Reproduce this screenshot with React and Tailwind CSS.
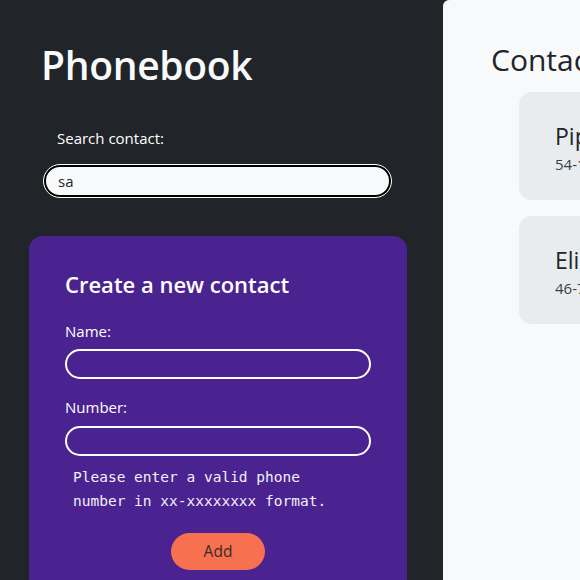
const contacts = [
  { name: "Pippa Sandberg", number: "54-1234567" },
  { name: "Elisa Sanders", number: "46-7654321" },
];

const App = () => {
  return (
    <div className="flex h-[580px] w-[580px] overflow-hidden bg-[#212529] font-['Open_Sans',sans-serif]">
      <div className="w-[443px] shrink-0 text-white">
        <h1 className="ml-[41px] mt-[41px] text-[39px] font-semibold leading-[48px] tracking-[-0.3px] text-[#f8f9fa]">
          Phonebook
        </h1>
        <div className="ml-[44px] mt-[39px] w-[347px]">
          <label className="ml-[13px] block text-[15px] leading-[20px]">Search contact:</label>
          <input
            defaultValue="sa"
            className="mt-[17px] h-[32px] w-full rounded-full border-2 border-black bg-[#f8f9fa] px-[12px] text-[15px] text-[#212529] outline outline-1 outline-white"
          />
        </div>
        <div className="ml-[29px] mt-[39px] h-[400px] w-[378px] rounded-[14px] bg-[#4a2391] px-[36px] pt-[32px]">
          <h2 className="text-[22px] font-semibold leading-[32px]">Create a new contact</h2>
          <label className="mt-[21px] block text-[15px] leading-[20px]">Name:</label>
          <input className="mt-[8px] h-[30px] w-full rounded-full border-2 border-white bg-transparent px-3 text-white outline-none" />
          <label className="mt-[18px] block text-[15px] leading-[20px]">Number:</label>
          <input className="mt-[9px] h-[30px] w-full rounded-full border-2 border-white bg-transparent px-3 text-white outline-none" />
          <p className="mt-[9px] pl-[8px] pr-[24px] font-['DejaVu_Sans_Mono',monospace] text-[14.5px] leading-[24px] text-[#f3f0fa]">
            Please enter a valid phone number in xx-xxxxxxxx format.
          </p>
          <div className="mt-[20px] flex justify-center">
            <button className="h-[37px] w-[94px] rounded-full bg-[#f7704f] text-[15.5px] text-[#3a2a2a]">Add</button>
          </div>
        </div>
      </div>
      <div className="min-w-[400px] flex-1 rounded-tl-[6px] bg-[#f8f9fa] pl-[48px] pt-[40px] text-[#212529]">
        <h2 className="text-[30px] font-medium leading-[40px]">Contacts</h2>
        <div className="ml-[28px] mt-[12px] flex flex-col gap-[16px]">
          {contacts.map((c) => (
            <div key={c.name} className="h-[108px] w-[300px] rounded-[13px] bg-[#e9ecef] px-[36px] pt-[28px]">
              <div className="text-[23px] leading-[32px]">{c.name}</div>
              <div className="mt-[2px] text-[15px] leading-[20px] text-[#3a3f44]">{c.number}</div>
            </div>
          ))}
        </div>
      </div>
    </div>
  );
};

export default App;
